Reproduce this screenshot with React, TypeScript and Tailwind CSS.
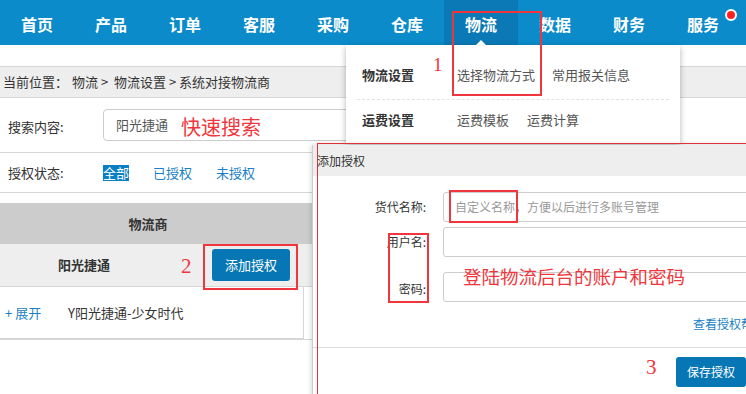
import React from 'react';

const navItems = ['首页', '产品', '订单', '客服', '采购', '仓库', '物流', '数据', '财务', '服务'];

// red markers drawn over the screenshot
const Mark: React.FC<{ className: string }> = ({ className }) => (
  <div className={`absolute border-2 border-[#f0363c] ${className}`} />
);

export default function App() {
  return (
    <div className="relative w-[746px] h-[394px] overflow-hidden bg-white font-['Noto_Sans_CJK_SC',sans-serif] text-[13px] text-[#333]">
      {/* Top nav */}
      <nav className="flex h-[45px] bg-[#0b8bca]">
        {navItems.map((item) => (
          <div
            key={item}
            className={`relative flex w-[74px] items-center justify-center pt-[3px] text-[16px] font-bold text-white ${
              item === '物流' ? 'bg-[#0a79b6]' : ''
            }`}
          >
            {item}
            {item === '服务' && (
              <span className="absolute right-[3px] top-[9px] h-[12px] w-[12px] rounded-full border-2 border-white bg-[#f22]" />
            )}
          </div>
        ))}
      </nav>

      {/* Breadcrumb */}
      <div className="mt-[21px] flex h-[32px] items-center border-y border-[#d6d6d6] bg-[#eee] pl-[3px]">
        <span>当前位置：</span>
        <span className="ml-[4px]">物流 &gt;&nbsp; 物流设置 &gt; 系统对接物流商</span>
      </div>

      {/* Search */}
      <div className="flex h-[55px] items-center border-b border-[#d6d6d6] pl-[8px]">
        <span className="w-[95px] pt-[3px]">搜索内容:</span>
        <div className="flex h-[32px] w-[330px] items-center rounded-[4px] border border-[#ccc] pl-[12px] text-[#555]">
          阳光捷通
        </div>
      </div>

      {/* Auth status */}
      <div className="flex h-[40px] items-center border-b border-[#d6d6d6] pl-[8px]">
        <span className="w-[95px]">授权状态:</span>
        <div className="flex items-center gap-[24px] text-[#1a7fc4]">
          <span className="bg-[#0a7fc4] leading-[16px] text-white">全部</span>
          <span>已授权</span>
          <span>未授权</span>
        </div>
      </div>

      {/* Table */}
      <div className="mt-[10px] w-[312px]">
        <div className="flex h-[41px] items-center justify-center bg-[#ccc] pr-[16px] font-bold">物流商</div>
        <div className="flex h-[43px] items-center border-b border-[#d6d6d6] bg-[#eee]">
          <span className="w-[168px] text-center font-bold">阳光捷通</span>
          <button className="ml-[44px] h-[32px] w-[78px] rounded-[3px] bg-[#0677b4] text-[13px] text-white">
            添加授权
          </button>
        </div>
        <div className="flex h-[52px] w-[304px] items-center border-b border-r border-[#d6d6d6] pl-[5px]">
          <span className="w-[63px] text-[#1a7fc4]">+ 展开</span>
          <span>Y阳光捷通-少女时代</span>
        </div>
        <div className="h-px w-[312px] bg-[#d6d6d6]" />
      </div>

      {/* Dropdown menu */}
      <div className="absolute left-[346px] top-[45px] w-[334px] h-[98px] bg-white shadow-[0_2px_6px_rgba(0,0,0,0.3)]">
        <div className="absolute left-[130px] top-[-5px] h-0 w-0 border-x-[5px] border-b-[5px] border-x-transparent border-b-white" />
        <div className="mx-[11px] flex h-[55px] items-center border-b border-dashed border-[#e2e2e2] pl-[5px] pt-[6px]">
          <span className="w-[95px] font-bold">物流设置</span>
          <div className="flex gap-[17px] text-[#555]">
            <span>选择物流方式</span>
            <span>常用报关信息</span>
          </div>
        </div>
        <div className="mx-[11px] flex h-[43px] items-center pl-[5px] pb-[4px]">
          <span className="w-[95px] font-bold">运费设置</span>
          <div className="flex gap-[18px] text-[#555]">
            <span>运费模板</span>
            <span>运费计算</span>
          </div>
        </div>
      </div>

      {/* Dialog */}
      <div className="absolute left-[312px] top-[145px] w-[450px] h-[260px] border-l border-[#ccc] bg-white text-[12px] shadow-[0_0_6px_rgba(0,0,0,0.2)]">
        <div className="flex h-[31px] items-center bg-[#eee] pl-[4px]">添加授权</div>
        <div className="mt-[16px] flex items-center">
          <span className="w-[113px] text-right">货代名称:</span>
          <div className="ml-[17px] flex h-[30px] flex-1 items-center rounded-[3px] border border-[#ccc] pl-[11px] text-[#999]">
            自定义名称，方便以后进行多账号管理
          </div>
        </div>
        <div className="mt-[5px] flex items-center">
          <span className="w-[113px] text-right">用户名:</span>
          <div className="ml-[17px] h-[30px] flex-1 rounded-[3px] border border-[#ccc]" />
        </div>
        <div className="mt-[15px] flex items-center">
          <span className="w-[113px] pt-[4px] text-right">密码:</span>
          <div className="ml-[17px] h-[30px] flex-1 rounded-[3px] border border-[#ccc]" />
        </div>
        <div className="mt-[13px] h-[18px] pl-[380px] text-[#1a7fc4] whitespace-nowrap">查看授权帮助</div>
        <div className="mt-[14px] h-px bg-[#ddd]" />
        <div className="mt-[9px] pl-[363px]">
          <button className="h-[30px] w-[70px] rounded-[3px] bg-[#0677b4] text-white">保存授权</button>
        </div>
      </div>

      {/* Annotations */}
      <div className="absolute left-[317px] top-[143px] h-[260px] w-[440px] border-l border-t border-[#e0303a]" />
      <Mark className="left-[452px] top-[11px] h-[85px] w-[90px]" />
      <Mark className="left-[203px] top-[244px] h-[46px] w-[95px]" />
      <Mark className="left-[449px] top-[190px] h-[33px] w-[69px]" />
      <Mark className="left-[388px] top-[233px] h-[70px] w-[41px]" />

      <span className="absolute left-[433px] top-[51px] font-['Liberation_Serif',serif] text-[19px] text-[#f0363c]">1</span>
      <span className="absolute left-[181px] top-[251px] font-['Liberation_Serif',serif] text-[21px] text-[#f0363c]">2</span>
      <span className="absolute left-[646px] top-[352px] font-['Liberation_Serif',serif] text-[21px] text-[#f0363c]">3</span>
      <span className="absolute left-[181px] top-[114px] text-[20px] leading-[26px] text-[#f0363c]">快速搜索</span>
      <span className="absolute left-[463px] top-[263px] text-[18.5px] leading-[26px] text-[#f0363c]">登陆物流后台的账户和密码</span>
    </div>
  );
}
